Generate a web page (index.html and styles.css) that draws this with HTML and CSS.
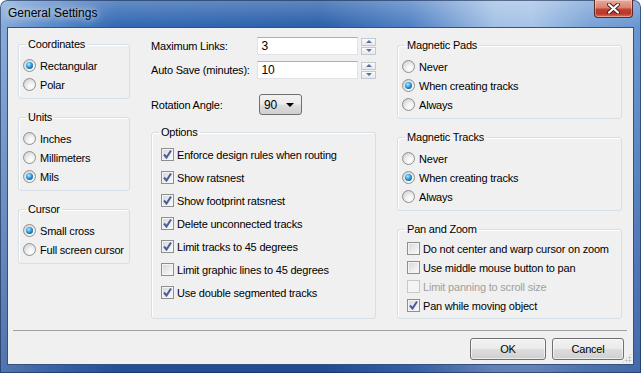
FILE: index.html
```html
<!DOCTYPE html>
<html>

<head>
    <link rel="stylesheet" href="styles.css">
</head>

<body>
    <div class="window">
        <div class="titlebar">
            <span class="title">General Settings</span>
            <button class="close">
                <svg width="13" height="11" viewBox="0 0 13 11">
                    <path d="M2 1.5 L11 9.5 M11 1.5 L2 9.5" stroke="#4a1c16" stroke-width="4" stroke-linecap="round" />
                    <path d="M2 1.5 L11 9.5 M11 1.5 L2 9.5" stroke="#fff" stroke-width="2.2" stroke-linecap="round" />
                </svg>
            </button>
        </div>

        <div class="client">
            <div class="main">
                <!-- left column -->
                <div class="col">
                    <fieldset class="group">
                        <legend>Coordinates</legend>
                        <div class="items">
                            <label class="opt"><span class="radio on"></span>Rectangular</label>
                            <label class="opt"><span class="radio"></span>Polar</label>
                        </div>
                    </fieldset>
                    <fieldset class="group">
                        <legend>Units</legend>
                        <div class="items">
                            <label class="opt"><span class="radio"></span>Inches</label>
                            <label class="opt"><span class="radio"></span>Millimeters</label>
                            <label class="opt"><span class="radio on"></span>Mils</label>
                        </div>
                    </fieldset>
                    <fieldset class="group">
                        <legend>Cursor</legend>
                        <div class="items">
                            <label class="opt"><span class="radio on"></span>Small cross</label>
                            <label class="opt"><span class="radio"></span>Full screen cursor</label>
                        </div>
                    </fieldset>
                </div>

                <!-- middle column -->
                <div class="col col-mid">
                    <div class="field">
                        <label class="fw">Maximum Links:</label>
                        <span class="textbox">3</span>
                        <span class="spin"><span class="spin-btn up"></span><span class="spin-btn down"></span></span>
                    </div>
                    <div class="field">
                        <label class="fw">Auto Save (minutes):</label>
                        <span class="textbox">10</span>
                        <span class="spin"><span class="spin-btn up"></span><span class="spin-btn down"></span></span>
                    </div>
                    <div class="field field-combo">
                        <label class="fw">Rotation Angle:</label>
                        <span class="combo">90<span class="arrow"></span></span>
                    </div>
                    <fieldset class="group options">
                        <legend>Options</legend>
                        <div class="items checks">
                            <label class="opt"><span class="check on"></span>Enforce design rules when routing</label>
                            <label class="opt"><span class="check on"></span>Show ratsnest</label>
                            <label class="opt"><span class="check on"></span>Show footprint ratsnest</label>
                            <label class="opt"><span class="check on"></span>Delete unconnected tracks</label>
                            <label class="opt"><span class="check on"></span>Limit tracks to 45 degrees</label>
                            <label class="opt"><span class="check"></span>Limit graphic lines to 45 degrees</label>
                            <label class="opt"><span class="check on"></span>Use double segmented tracks</label>
                        </div>
                    </fieldset>
                </div>

                <!-- right column -->
                <div class="col col-right">
                    <fieldset class="group">
                        <legend>Magnetic Pads</legend>
                        <div class="items">
                            <label class="opt"><span class="radio"></span>Never</label>
                            <label class="opt"><span class="radio on"></span>When creating tracks</label>
                            <label class="opt"><span class="radio"></span>Always</label>
                        </div>
                    </fieldset>
                    <fieldset class="group">
                        <legend>Magnetic Tracks</legend>
                        <div class="items">
                            <label class="opt"><span class="radio"></span>Never</label>
                            <label class="opt"><span class="radio on"></span>When creating tracks</label>
                            <label class="opt"><span class="radio"></span>Always</label>
                        </div>
                    </fieldset>
                    <fieldset class="group">
                        <legend>Pan and Zoom</legend>
                        <div class="items pan">
                            <label class="opt"><span class="check"></span>Do not center and warp cursor on zoom</label>
                            <label class="opt"><span class="check"></span>Use middle mouse button to pan</label>
                            <label class="opt disabled"><span class="check"></span>Limit panning to scroll size</label>
                            <label class="opt"><span class="check on"></span>Pan while moving object</label>
                        </div>
                    </fieldset>
                </div>
            </div>

            <div class="sep"></div>

            <div class="buttons">
                <button class="btn btn-ok">OK</button>
                <button class="btn btn-cancel">Cancel</button>
            </div>
            <span class="grip"></span>
        </div>
    </div>
</body>

</html>
```

FILE: styles.css
```css
body {
    margin: 0;
    font-family: "Liberation Sans", Arial, sans-serif;
    font-size: 11px;
    letter-spacing: -0.2px;
    color: #000;
}

.window {
    width: 641px;
    height: 373px;
    box-sizing: border-box;
    padding: 0 7px 8px 7px;
    border-radius: 7px 7px 0 0;
    display: flex;
    flex-direction: column;
    background:
        linear-gradient(180deg, rgba(255, 255, 255, 0.25), rgba(255, 255, 255, 0) 27px),
        linear-gradient(180deg, rgba(0, 0, 0, 0) 40px, rgba(20, 50, 120, 0.45) 100%),
        linear-gradient(90deg, #88acd9 0%, #5e8dcc 7%, #3168b3 18%, #2a5faa 50%, #4f80c4 64%, #a2c0e5 77%, #a6c3e7 83%, #7aa3d7 92%, #6895d0 100%);
    box-shadow: inset 0 0 0 1px rgba(20, 40, 80, 0.6);
}

/* title bar */
.titlebar {
    height: 27px;
    display: flex;
    align-items: flex-start;
    justify-content: space-between;
}

.title {
    font-size: 12px;
    letter-spacing: 0;
    line-height: 27px;
    padding-left: 1px;
    text-shadow: 0 0 6px rgba(255, 255, 255, 0.8), 0 0 10px rgba(255, 255, 255, 0.6);
}

.close {
    width: 39px;
    height: 18px;
    margin: 0 1px 0 0;
    padding: 0;
    border: 1px solid #5b2a22;
    border-top: none;
    border-radius: 0 0 4px 4px;
    background: linear-gradient(180deg, #e9a99b 0%, #d88371 45%, #c4402f 55%, #b8382a 80%, #d9765c 100%);
    box-shadow: inset 0 0 0 1px rgba(255, 255, 255, 0.35);
    display: flex;
    align-items: center;
    justify-content: center;
}

/* client area */
.client {
    flex: 1;
    position: relative;
    background: #f0f0f0;
    border: 1px solid #34527f;
    display: flex;
    flex-direction: column;
}

.main {
    display: grid;
    grid-template-columns: 112px 225px 225px;
    column-gap: 21px;
    padding: 9px 0 0 10px;
    align-items: start;
}

.col {
    display: flex;
    flex-direction: column;
    gap: 11px;
}

.col-right {
    margin-top: 1px;
}

/* group boxes */
.group {
    margin: 0;
    padding: 0;
    min-width: 0;
    border: 1px solid #d5dfe5;
    border-radius: 3px;
    box-shadow: inset 1px 1px 0 #fff;
}

.group legend {
    margin-left: 7px;
    padding: 0 2px;
    line-height: 14px;
    height: 14px;
}

.items {
    display: flex;
    flex-direction: column;
    padding: 5px 0 4px 4px;
}

.opt {
    display: flex;
    align-items: center;
    gap: 4px;
    height: 19px;
    white-space: nowrap;
}

.checks {
    padding: 4px 0 14px 9px;
}

.checks .opt {
    height: 23px;
    gap: 3px;
}

.pan {
    padding: 3px 0 3px 9px;
}

.pan .opt {
    gap: 3px;
}

.opt.disabled {
    color: #a0a0a0;
}

/* radio buttons */
.radio {
    flex: none;
    width: 13px;
    height: 13px;
    box-sizing: border-box;
    border-radius: 50%;
    border: 1px solid #8e9090;
    background: radial-gradient(circle at 65% 70%, #ffffff 0%, #f2f2f2 35%, #d4d4d4 80%);
    display: flex;
    align-items: center;
    justify-content: center;
}

.radio.on::after {
    content: "";
    width: 7px;
    height: 7px;
    border-radius: 50%;
    background: radial-gradient(circle at 40% 35%, #b9ecff 0%, #35a2e0 40%, #0f5a9c 80%, #0b3f73 100%);
}

/* check boxes */
.check {
    flex: none;
    width: 13px;
    height: 13px;
    box-sizing: border-box;
    border: 1px solid #8e8f8f;
    background: linear-gradient(135deg, #d6d6d6 0%, #eaeaea 50%, #fbfbfb 100%);
    box-shadow: inset 0 0 0 1px #f4f4f4;
}

.check.on {
    background:
        url("data:image/svg+xml,%3Csvg xmlns='http://www.w3.org/2000/svg' width='11' height='11'%3E%3Cpath d='M2 5.5 L4.5 8.5 L9 1.5' fill='none' stroke='%234b5c9e' stroke-width='2'/%3E%3C/svg%3E") center no-repeat,
        linear-gradient(135deg, #d6d6d6 0%, #eaeaea 50%, #fbfbfb 100%);
}

.disabled .check {
    border-color: #c8c8c8;
    background: #f4f4f4;
}

/* top fields */
.col-mid {
    gap: 0;
}

.field {
    display: flex;
    align-items: center;
    height: 18px;
}

.col-mid .field + .field {
    margin-top: 6px;
}

.col-mid .field.field-combo {
    margin-top: 15px;
    height: 21px;
}

.field .fw {
    width: 107px;
}

.textbox {
    width: 101px;
    height: 18px;
    box-sizing: border-box;
    padding: 1px 3px;
    background: #fff;
    border: 1px solid #dfe3e8;
    border-top-color: #abadb3;
    line-height: 15px;
    font-size: 12px;
}

.spin {
    margin-left: 3px;
    display: flex;
    flex-direction: column;
    gap: 1px;
}

.spin-btn {
    width: 15px;
    height: 8px;
    box-sizing: border-box;
    border: 1px solid #c4c9d0;
    background: linear-gradient(180deg, #fbfbfb, #e6e8ec);
    display: flex;
    align-items: center;
    justify-content: center;
}

.spin-btn::after {
    content: "";
    border-left: 3px solid transparent;
    border-right: 3px solid transparent;
}

.spin-btn.up::after {
    border-bottom: 3px solid #5470a0;
}

.spin-btn.down::after {
    border-top: 3px solid #5470a0;
}

.combo {
    width: 43px;
    height: 21px;
    box-sizing: border-box;
    margin-left: 1px;
    padding-left: 4px;
    padding-right: 7px;
    border: 1px solid #707070;
    border-radius: 3px;
    background: linear-gradient(180deg, #f2f2f2 0%, #ebebeb 48%, #dddddd 52%, #cfcfcf 100%);
    display: flex;
    align-items: center;
    justify-content: space-between;
    font-size: 12px;
}

.combo .arrow {
    border-left: 4px solid transparent;
    border-right: 4px solid transparent;
    border-top: 4px solid #000;
}

.options {
    margin-top: 10px;
}

/* bottom */
.sep {
    margin: 11px 6px 0 5px;
    border-top: 1px solid #a0a0a0;
}

.buttons {
    display: flex;
    justify-content: flex-end;
    gap: 6px;
    margin-top: 7px;
    padding-right: 9px;
}

.btn {
    height: 22px;
    padding: 0;
    font-family: inherit;
    font-size: 11px;
    letter-spacing: inherit;
    color: #000;
    border: 1px solid #707070;
    border-radius: 3px;
    background: linear-gradient(180deg, #f2f2f2 0%, #ebebeb 48%, #dddddd 52%, #cfcfcf 100%);
    box-shadow: inset 0 0 0 1px rgba(255, 255, 255, 0.6);
}

.btn-ok {
    width: 76px;
}

.btn-cancel {
    width: 72px;
}

.grip {
    position: absolute;
    right: 1px;
    bottom: 1px;
    width: 10px;
    height: 10px;
    background: radial-gradient(circle, #b6b6b6 0.8px, transparent 1.2px) 0 0 / 3px 3px;
    clip-path: polygon(100% 0, 100% 100%, 0 100%);
}
```
